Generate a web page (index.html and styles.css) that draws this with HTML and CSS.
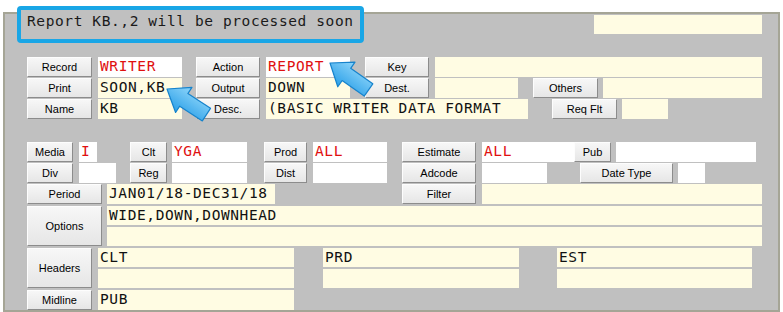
FILE: index.html
```html
<!DOCTYPE html>
<html lang="en">
<head>
  <meta charset="UTF-8">
  <meta name="viewport" content="width=device-width, initial-scale=1.0">
  <title>Report Writer</title>
  <link rel="stylesheet" href="styles.css">
</head>
<body>

  <div class="panel">
    <div class="row top">
      <span class="fld yel w168"></span>
    </div>

    <!-- request block -->
    <div class="block req">
      <div class="row">
        <button class="btn w65">Record</button>
        <span class="fld wht w84 red">WRITER</span>
        <button class="btn w64 ml14">Action</button>
        <span class="fld wht w84 red">REPORT</span>
        <button class="btn w64 ml15">Key</button>
        <span class="fld yel w327"></span>
      </div>
      <div class="row">
        <button class="btn w65">Print</button>
        <span class="fld yel w84">SOON,KB</span>
        <button class="btn w64 ml14">Output</button>
        <span class="fld yel w84">DOWN</span>
        <button class="btn w64 ml15">Dest.</button>
        <span class="fld yel w83"></span>
        <button class="btn w65 ml15">Others</button>
        <span class="fld yel w159 ml5"></span>
      </div>
      <div class="row">
        <button class="btn w65">Name</button>
        <span class="fld yel w84">KB</span>
        <button class="btn w64 ml14">Desc.</button>
        <span class="fld yel w262">(BASIC WRITER DATA FORMAT</span>
        <button class="btn w65 ml24">Req Flt</button>
        <span class="fld yel w46 ml5"></span>
      </div>
    </div>

    <!-- filter block -->
    <div class="block flt">
      <div class="row">
        <button class="btn w46">Media</button>
        <span class="fld wht w18 red">I</span>
        <button class="btn w37 ml33">Clt</button>
        <span class="fld wht w75 red ml5">YGA</span>
        <button class="btn w43 ml17">Prod</button>
        <span class="fld wht w74 red">ALL</span>
        <button class="btn w74 ml15">Estimate</button>
        <span class="fld wht w92 red">ALL</span>
        <button class="btn w37">Pub</button>
        <span class="fld wht w140 ml5"></span>
      </div>
      <div class="row">
        <button class="btn w46">Div</button>
        <span class="fld wht w37"></span>
        <button class="btn w37 ml14">Reg</button>
        <span class="fld wht w75 ml5"></span>
        <button class="btn w43 ml17">Dist</button>
        <span class="fld wht w74"></span>
        <button class="btn w74 ml15">Adcode</button>
        <span class="fld wht w65"></span>
        <button class="btn w93 ml33">Date Type</button>
        <span class="fld wht w27 ml5"></span>
      </div>
      <div class="row gap2">
        <button class="btn w75">Period</button>
        <span class="fld yel w168 ml5">JAN01/18-DEC31/18</span>
        <button class="btn w74 ml127">Filter</button>
        <span class="fld yel w280"></span>
      </div>
      <div class="row tall">
        <button class="btn w75">Options</button>
        <div class="stack w655 ml5">
          <span class="fld yel">WIDE,DOWN,DOWNHEAD</span>
          <span class="fld yel"></span>
        </div>
      </div>
      <div class="row tall">
        <button class="btn w65">Headers</button>
        <div class="stack w196">
          <span class="fld yel">CLT</span>
          <span class="fld yel"></span>
        </div>
        <div class="stack w196 ml29">
          <span class="fld yel">PRD</span>
          <span class="fld yel"></span>
        </div>
        <div class="stack w195 ml38">
          <span class="fld yel">EST</span>
          <span class="fld yel"></span>
        </div>
      </div>
      <div class="row">
        <button class="btn w65">Midline</button>
        <span class="fld yel w196">PUB</span>
      </div>
    </div>
  </div>

  <div class="status">Report KB.,2 will be processed soon</div>

  <svg class="arrows" width="783" height="312" viewBox="0 0 783 312">
    <defs>
      <linearGradient id="arrowFill" x1="0" y1="0" x2="0" y2="1">
        <stop offset="0" stop-color="#8fd6fa"/>
        <stop offset="1" stop-color="#2a9fe8"/>
      </linearGradient>
    </defs>
    <polygon transform="translate(167 89) rotate(33)" points="0,0 20,-15 20,-7.5 47,-7.5 47,7.5 20,7.5 20,15"
             fill="url(#arrowFill)" stroke="#1683cc" stroke-width="1.2" stroke-linejoin="round"/>
    <polygon transform="translate(330 63) rotate(35)" points="0,0 20,-15 20,-7.5 47,-7.5 47,7.5 20,7.5 20,15"
             fill="url(#arrowFill)" stroke="#1683cc" stroke-width="1.2" stroke-linejoin="round"/>
  </svg>

</body>
</html>
```

FILE: styles.css
```css
body {
  margin: 0;
  background: #fff;
  font-family: "Liberation Sans", Arial, sans-serif;
  position: relative;
  width: 783px;
  height: 312px;
  overflow: hidden;
}

.panel {
  margin: 12px 0 0 3px;
  width: 777px;
  height: 300px;
  box-sizing: border-box;
  border: 2px solid #a5a596;
  background: #c0c0c0;
  padding: 1px 16px 0 22px;
}

.row {
  display: flex;
  height: 20px;
  margin-bottom: 1px;
  align-items: stretch;
}

.row > * {
  flex-shrink: 0;
}

/* default spacing between controls in a row */
.row > * + * {
  margin-left: 6px;
}

.row.top {
  justify-content: flex-end;
  height: 19px;
  margin-bottom: 0;
}

.row.gap2 {
  margin-bottom: 2px;
}

.row.tall {
  height: 40px;
  margin-bottom: 2px;
}

.block.req,
.block.flt {
  margin-top: 23px;
}

.btn {
  box-sizing: border-box;
  margin: 0;
  padding: 0;
  font-family: "Liberation Sans", Arial, sans-serif;
  font-size: 11px;
  color: #000;
  background: linear-gradient(#f7f7f7, #e6e6e6);
  border: 1px solid;
  border-color: #fdfdfd #8c8c8c #8c8c8c #fdfdfd;
  text-align: center;
}

.fld {
  display: block;
  box-sizing: border-box;
  padding: 0 2px;
  font-family: "DejaVu Sans Mono", "Liberation Mono", monospace;
  font-size: 14.5px;
  letter-spacing: 0.6px;
  line-height: 19px;
  color: #111;
  white-space: nowrap;
  overflow: hidden;
}

.yel { background: #fffce3; }
.wht { background: #fff; }
.red { color: #e01010; }

.stack {
  display: flex;
  flex-direction: column;
  gap: 2px;
}

.stack .fld {
  flex: 1;
}

.row > .ml5 { margin-left: 5px; }
.row > .ml14 { margin-left: 14px; }
.row > .ml15 { margin-left: 15px; }
.row > .ml17 { margin-left: 17px; }
.row > .ml24 { margin-left: 24px; }
.row > .ml29 { margin-left: 29px; }
.row > .ml33 { margin-left: 33px; }
.row > .ml38 { margin-left: 38px; }
.row > .ml127 { margin-left: 127px; }

/* widths */
.w18 { width: 18px; }
.w27 { width: 27px; }
.w37 { width: 37px; }
.w43 { width: 43px; }
.w46 { width: 46px; }
.w64 { width: 64px; }
.w65 { width: 65px; }
.w74 { width: 74px; }
.w75 { width: 75px; }
.w83 { width: 83px; }
.w84 { width: 84px; }
.w92 { width: 92px; }
.w93 { width: 93px; }
.w140 { width: 140px; }
.w159 { width: 159px; }
.w168 { width: 168px; }
.w195 { width: 195px; }
.w196 { width: 196px; }
.w262 { width: 262px; }
.w280 { width: 280px; }
.w327 { width: 327px; }
.w655 { width: 655px; }

.status {
  position: absolute;
  left: 17px;
  top: 6px;
  width: 347px;
  height: 37px;
  box-sizing: border-box;
  border: 4px solid #19a6e6;
  border-radius: 4px;
  background: #c0c0c0;
  padding: 3px 0 0 6px;
  font-family: "DejaVu Sans Mono", "Liberation Mono", monospace;
  font-size: 14.5px;
  letter-spacing: 0.6px;
  color: #1a1a1a;
  white-space: nowrap;
}

.arrows {
  position: absolute;
  left: 0;
  top: 0;
  pointer-events: none;
}
```
